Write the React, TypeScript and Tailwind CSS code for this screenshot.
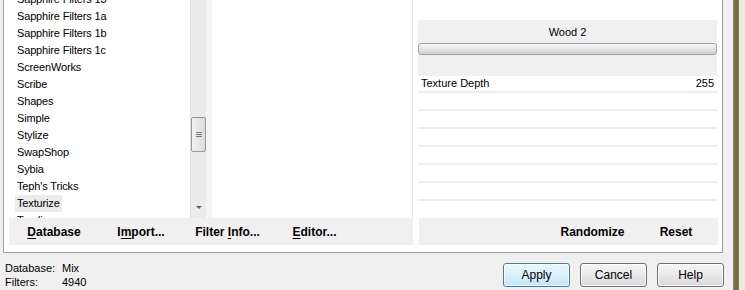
import { type FC } from 'react';

const filters = [
    'Sapphire Filters 13',
    'Sapphire Filters 1a',
    'Sapphire Filters 1b',
    'Sapphire Filters 1c',
    'ScreenWorks',
    'Scribe',
    'Shapes',
    'Simple',
    'Stylize',
    'SwapShop',
    'Sybia',
    "Teph's Tricks",
    'Texturize',
    'Toadies',
];

const Key: FC<{ pre?: string; u: string; post: string }> = ({ pre = '', u, post }) => (
    <span>
        {pre}
        <span className="underline underline-offset-2">{u}</span>
        {post}
    </span>
);

const WinButton: FC<{ label: string; focused?: boolean }> = ({ label, focused }) => (
    <button
        className={`w-[67px] h-[24px] rounded-[3px] border text-[12px] text-black bg-gradient-to-b ${
            focused
                ? 'border-[#3c7fb1] from-[#eaf6fd] via-[#d9f0fc] to-[#bee6fd] shadow-[inset_0_0_0_1px_#ffffff]'
                : 'border-[#707070] from-[#f6f6f6] via-[#e8e8e8] to-[#d8d8d8] shadow-[inset_0_0_0_1px_#fcfcfc]'
        }`}
    >
        {label}
    </button>
);

const FilterList: FC = () => (
    <div className="w-[186px] h-[218px] overflow-hidden bg-white">
        <div className="-mt-[9px] flex flex-col">
            {filters.map((name) => (
                <div key={name} className="h-[17px] flex items-center">
                    <span
                        className={`ml-[11px] px-[2px] h-[17px] leading-[17px] tracking-[-0.15px] ${
                            name === 'Texturize' ? 'bg-[#ececec]' : ''
                        }`}
                    >
                        {name}
                    </span>
                </div>
            ))}
        </div>
    </div>
);

const ScrollBar: FC = () => (
    <div className="w-[16px] h-[218px] bg-[#ebebeb] border-l border-[#e2e2e2] flex flex-col items-center">
        <div className="h-[117px]" />
        <div className="w-[15px] h-[35px] rounded-[2px] border border-[#979797] bg-gradient-to-r from-[#f3f3f3] to-[#dcdcdc] flex flex-col items-center justify-center gap-[1px]">
            <div className="w-[6px] h-px bg-[#7a7a7a]" />
            <div className="w-[6px] h-px bg-[#7a7a7a]" />
            <div className="w-[6px] h-px bg-[#7a7a7a]" />
        </div>
        <div className="flex-1" />
        <div className="mb-[9px] w-0 h-0 border-l-[3px] border-r-[3px] border-t-[3px] border-l-transparent border-r-transparent border-t-[#606060]" />
    </div>
);

const ParamRows: FC = () => (
    <div className="flex flex-col">
        <div className="h-[17px] flex items-center justify-between px-[3px] border-b-2 border-[#eeeeee]">
            <span>Texture Depth</span>
            <span>255</span>
        </div>
        {[0, 1, 2, 3, 4, 5].map((i) => (
            <div key={i} className="h-[18px] border-b-2 border-[#eeeeee]" />
        ))}
    </div>
);

export default function App() {
    return (
        <div className="w-[745px] h-[290px] overflow-hidden bg-[#f0f0f0] flex text-[11px] text-black font-['Liberation_Sans',Arial,sans-serif]">
            <div className="w-[733px] flex flex-col">
                {/* main white panel */}
                <div className="ml-[3px] w-[720px] h-[253px] bg-white border-l border-r border-b border-[#a0a0a0] flex flex-col">
                    <div className="h-[218px] flex">
                        <FilterList />
                        <ScrollBar />
                        <div className="w-[6px] bg-[#f5f5f5]" />
                        <div className="w-[201px] bg-white border-r border-[#e3e3e3]" />
                        <div className="w-[5px]" />
                        <div className="w-[299px] flex flex-col">
                            <div className="h-[20px]" />
                            <div className="h-[56px] bg-[#f0f0f0] flex flex-col">
                                <div className="h-[23px] flex items-center justify-center pt-[1px]">Wood 2</div>
                                <div className="h-[12px] rounded-[3px] border border-[#a3a3a3] bg-gradient-to-b from-[#f7f7f7] via-[#e6e6e6] to-[#cdcdcd]" />
                            </div>
                            <ParamRows />
                        </div>
                    </div>
                    <div className="h-[27px] flex text-[12px] font-bold">
                        <div className="ml-[5px] w-[404px] bg-[#f0f0f0] flex items-center">
                            <div className="w-[90px] text-center"><Key u="D" post="atabase" /></div>
                            <div className="w-[84px] text-center"><Key pre="I" u="m" post="port..." /></div>
                            <div className="w-[89px] text-center"><Key pre="Filter " u="I" post="nfo..." /></div>
                            <div className="w-[85px] text-center"><Key u="E" post="ditor..." /></div>
                        </div>
                        <div className="w-[6px]" />
                        <div className="w-[299px] bg-[#f0f0f0] flex items-center justify-end">
                            <div className="w-[83px] text-center">Randomize</div>
                            <div className="w-[84px] text-center">Reset</div>
                        </div>
                    </div>
                </div>
                {/* status + buttons */}
                <div className="flex-1 flex">
                    <div className="ml-[5px] mt-[9px] grid grid-cols-[57px_auto] leading-[13px]">
                        <span>Database:</span>
                        <span>Mix</span>
                        <span>Filters:</span>
                        <span>4940</span>
                    </div>
                    <div className="ml-auto mr-[9px] mt-[10px] flex gap-[10px] h-[24px]">
                        <WinButton label="Apply" focused />
                        <WinButton label="Cancel" />
                        <WinButton label="Help" />
                    </div>
                </div>
            </div>
            <div className="w-[6px] bg-gradient-to-r from-[#8a8658] via-[#6e6a3e] to-[#7c7850]" />
            <div className="w-[6px] bg-[#e9e9e4]" />
        </div>
    );
}
